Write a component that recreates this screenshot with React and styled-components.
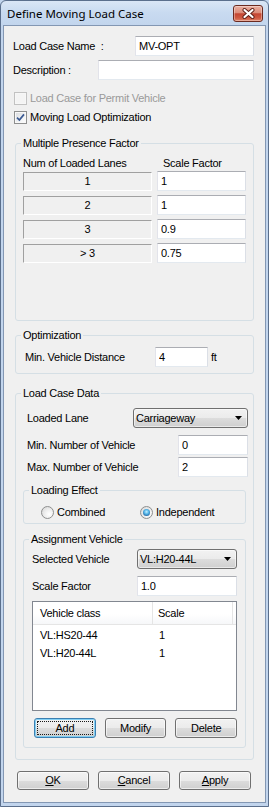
import React from "react";
import styled, { createGlobalStyle } from "styled-components";

const UI_FONT = `"Liberation Sans", Arial, sans-serif`;

const GlobalStyle = createGlobalStyle`
  html, body { margin: 0; padding: 0; background: #c2d5ed; }
  *, *::before, *::after { box-sizing: border-box; }
`;

const Window = styled.div`
  width: 269px;
  height: 807px;
  display: flex;
  flex-direction: column;
  border: 1px solid #5b6f8c;
  border-radius: 6px 6px 0 0;
  background: linear-gradient(to bottom, #dae6f5 0px, #c8daf0 12px, #c2d5ed 25px, #c2d5ed 100%);
  padding: 0 2px 3px 2px;
  font-family: ${UI_FONT};
  font-size: 11px;
  letter-spacing: -0.25px;
  color: #000;
`;

const TitleBar = styled.div`
  height: 24px;
  flex: none;
  display: flex;
  align-items: flex-start;
  justify-content: space-between;
  padding: 0 3px 0 4px;
`;

const Title = styled.div`
  font-family: "Noto Sans", "Liberation Sans", sans-serif;
  font-size: 11.5px;
  line-height: 16px;
  margin-top: 5px;
  letter-spacing: 0;
  color: #000;
`;

const CloseButton = styled.div`
  width: 30px;
  height: 17px;
  margin-top: 4px;
  border: 1px solid #6b2a20;
  border-radius: 3px;
  background: linear-gradient(
    to bottom,
    #eab0a2 0%,
    #dc8c79 45%,
    #c44531 52%,
    #cf5a42 80%,
    #e0856a 100%
  );
  box-shadow: inset 0 0 0 1px rgba(255, 255, 255, 0.35);
  display: flex;
  align-items: center;
  justify-content: center;
`;

const Content = styled.div`
  flex: 1;
  background: #f0f0f0;
  border: 1px solid #8397b3;
  padding: 10px 11px 0 9px;
  display: flex;
  flex-direction: column;
`;

const FieldRow = styled.div`
  display: flex;
  align-items: center;
  height: 20px;
  margin-top: ${(p) => p.$mt || 0}px;
  padding-left: ${(p) => p.$pl || 0}px;
  flex: none;
`;

const FieldLabel = styled.span`
  width: ${(p) => p.$w}px;
  flex: none;
  line-height: 13px;
  white-space: pre;
`;

const TextBox = styled.input`
  height: 20px;
  width: ${(p) => (p.$w ? `${p.$w}px` : "auto")};
  flex: ${(p) => (p.$w ? "none" : "1")};
  min-width: 0;
  border: 1px solid #dbdfe6;
  border-top-color: #abadb3;
  border-left-color: #e2e3ea;
  border-bottom-color: #e3e9ef;
  background: #fff;
  padding: 0 3px;
  margin: 0;
  font: inherit;
  letter-spacing: inherit;
  color: #000;
  outline: none;
`;

const CheckRow = styled.label`
  display: flex;
  align-items: center;
  gap: 3px;
  height: 13px;
  margin-top: ${(p) => p.$mt || 0}px;
  padding-left: 1px;
  line-height: 13px;
  color: ${(p) => (p.$disabled ? "#9a9a9a" : "#000")};
  flex: none;
`;

const CheckBox = styled.span`
  width: 13px;
  height: 13px;
  flex: none;
  border: 1px solid ${(p) => (p.$disabled ? "#c2c2c2" : "#8e8f8f")};
  background: ${(p) =>
    p.$disabled
      ? "#f4f4f4"
      : "linear-gradient(135deg, #d9dbdf 0%, #eef0f2 55%, #ffffff 100%)"};
  box-shadow: inset 0 0 0 1px ${(p) => (p.$disabled ? "#f7f7f7" : "#f8f8f8")};
  display: flex;
  align-items: center;
  justify-content: center;
`;

const Group = styled.fieldset`
  margin: ${(p) => p.$mt || 0}px ${(p) => p.$mr || 0}px 0 ${(p) => p.$ml || 0}px;
  padding: 0;
  border: 1px solid #d5dfe5;
  border-radius: 3px;
  min-width: 0;
  height: ${(p) => p.$h}px;
  flex: none;
`;

const Legend = styled.legend`
  margin-left: 5px;
  padding: 0 2px;
  line-height: 13px;
  font-size: 11px;
`;

const GroupBody = styled.div`
  padding: ${(p) => p.$pad};
  display: flex;
  flex-direction: column;
`;

const PresenceHeader = styled.div`
  display: grid;
  grid-template-columns: 129px 89px;
  column-gap: 5px;
  height: 14px;
  line-height: 14px;
`;

const HeaderText = styled.span`
  padding-left: ${(p) => p.$pl || 0}px;
`;

const PresenceGrid = styled.div`
  display: grid;
  grid-template-columns: 129px 89px;
  column-gap: 5px;
  row-gap: 4px;
  margin-top: 1px;
`;

const LaneCell = styled.div`
  height: 19px;
  margin-top: 1px;
  border: 1px solid;
  border-color: #a0a0a0 #ffffff #ffffff #a0a0a0;
  display: flex;
  align-items: center;
  justify-content: center;
  line-height: 13px;
`;

const Unit = styled.span`
  margin-left: 3px;
  line-height: 13px;
`;

const Combo = styled.div`
  height: 20px;
  width: ${(p) => (p.$w ? `${p.$w}px` : "auto")};
  flex: ${(p) => (p.$w ? "none" : "1")};
  border: 1px solid #707070;
  border-radius: 3px;
  background: linear-gradient(
    to bottom,
    #f2f2f2 0%,
    #ebebeb 50%,
    #dddddd 50%,
    #cfcfcf 100%
  );
  box-shadow: inset 0 0 0 1px rgba(255, 255, 255, 0.55);
  display: flex;
  align-items: center;
  justify-content: space-between;
  padding: 0 5px 0 2px;
  line-height: 13px;
`;

const RadioRow = styled.div`
  display: grid;
  grid-template-columns: 99px auto;
  align-items: center;
  height: 13px;
`;

const RadioItem = styled.label`
  display: flex;
  align-items: center;
  gap: 3px;
  line-height: 13px;
`;

const RadioDot = styled.span`
  width: 13px;
  height: 13px;
  flex: none;
  border-radius: 50%;
  border: 1px solid #8e8f8f;
  background: radial-gradient(circle at 65% 65%, #ffffff 0%, #eeeeee 45%, #d2d2d2 100%);
  display: flex;
  align-items: center;
  justify-content: center;
  &::after {
    content: "";
    display: ${(p) => (p.$checked ? "block" : "none")};
    width: 7px;
    height: 7px;
    border-radius: 50%;
    background: radial-gradient(
      circle at 50% 40%,
      #c6efff 0%,
      #55b6e8 40%,
      #1c5a98 85%,
      #184a80 100%
    );
  }
`;

const List = styled.div`
  height: 110px;
  margin-top: 5px;
  border: 1px solid #828790;
  background: #fff;
  display: flex;
  flex-direction: column;
  flex: none;
`;

const ListHeader = styled.div`
  display: flex;
  height: 23px;
  border-bottom: 1px solid #e5e5e5;
  background: linear-gradient(to bottom, #ffffff 0%, #ffffff 55%, #f6f7f9 100%);
`;

const HeaderCell = styled.div`
  width: ${(p) => (p.$w ? `${p.$w}px` : "auto")};
  flex: ${(p) => (p.$w ? "none" : "1")};
  border-right: ${(p) => (p.$w ? "1px solid #e5e5e5" : "none")};
  padding: 4px 0 0 ${(p) => p.$pl || 0}px;
  line-height: 14px;
`;

const ListBody = styled.div`
  padding-top: 1px;
`;

const ListRow = styled.div`
  display: flex;
  height: 18px;
  line-height: 18px;
`;

const ListCell = styled.div`
  width: ${(p) => (p.$w ? `${p.$w}px` : "auto")};
  flex: ${(p) => (p.$w ? "none" : "1")};
  padding-left: ${(p) => p.$pl || 0}px;
`;

const ButtonRow = styled.div`
  display: flex;
  gap: ${(p) => p.$gap}px;
  margin-top: ${(p) => p.$mt || 0}px;
  padding-left: ${(p) => p.$pl || 0}px;
  flex: none;
`;

const Button = styled.button`
  width: ${(p) => p.$w}px;
  height: ${(p) => p.$h || 20}px;
  margin: 0;
  padding: 2px;
  border: 1px solid ${(p) => (p.$focused ? "#3c7fb1" : "#707070")};
  border-radius: 3px;
  background: linear-gradient(
    to bottom,
    #f2f2f2 0%,
    #ebebeb 50%,
    #dddddd 50%,
    #cfcfcf 100%
  );
  box-shadow: inset 0 0 0 1px
    ${(p) => (p.$focused ? "rgba(120, 205, 245, 0.9)" : "rgba(255, 255, 255, 0.6)")};
  font: inherit;
  letter-spacing: inherit;
  color: #000;
  display: flex;
  cursor: default;
`;

const ButtonFace = styled.span`
  flex: 1;
  display: flex;
  align-items: center;
  justify-content: center;
  line-height: 13px;
  border: 1px dotted ${(p) => (p.$focused ? "#1a1a1a" : "transparent")};
`;

function ComboArrow() {
  return (
    <svg width="7" height="4" viewBox="0 0 7 4" aria-hidden="true">
      <path d="M0 0 H7 L3.5 4 Z" fill="#000" />
    </svg>
  );
}

function CheckMark() {
  return (
    <svg width="9" height="9" viewBox="0 0 9 9" aria-hidden="true">
      <path
        d="M1 4.6 L3.4 7 L8 1.4"
        fill="none"
        stroke="#3b5a93"
        strokeWidth="1.7"
      />
    </svg>
  );
}

const lanes = [
  { lanes: "1", factor: "1" },
  { lanes: "2", factor: "1" },
  { lanes: "3", factor: "0.9" },
  { lanes: "> 3", factor: "0.75" },
];

const vehicles = [
  { name: "VL:HS20-44", scale: "1" },
  { name: "VL:H20-44L", scale: "1" },
];

export default function App() {
  return (
    <>
      <GlobalStyle />
      <Window>
        <TitleBar>
          <Title>Define Moving Load Case</Title>
          <CloseButton aria-label="Close">
            <svg width="13" height="11" viewBox="0 0 13 11" aria-hidden="true">
              <path
                d="M2.5 2 L10.5 9 M10.5 2 L2.5 9"
                stroke="#5b1d14"
                strokeWidth="4"
                strokeLinecap="round"
              />
              <path
                d="M2.5 2 L10.5 9 M10.5 2 L2.5 9"
                stroke="#ffffff"
                strokeWidth="2.2"
                strokeLinecap="round"
              />
            </svg>
          </CloseButton>
        </TitleBar>

        <Content>
          <FieldRow>
            <FieldLabel $w={122}>{"Load Case Name  :"}</FieldLabel>
            <TextBox defaultValue="MV-OPT" readOnly />
          </FieldRow>
          <FieldRow $mt={4}>
            <FieldLabel $w={85}>Description :</FieldLabel>
            <TextBox defaultValue="" readOnly />
          </FieldRow>

          <CheckRow $mt={12} $disabled>
            <CheckBox $disabled />
            <span>Load Case for Permit Vehicle</span>
          </CheckRow>
          <CheckRow $mt={6}>
            <CheckBox>
              <CheckMark />
            </CheckBox>
            <span>Moving Load Optimization</span>
          </CheckRow>

          <Group $mt={13} $ml={2} $h={184}>
            <Legend>Multiple Presence Factor</Legend>
            <GroupBody $pad="6px 0 0 7px">
              <PresenceHeader>
                <HeaderText>Num of Loaded Lanes</HeaderText>
                <HeaderText $pl={6}>Scale Factor</HeaderText>
              </PresenceHeader>
              <PresenceGrid>
                {lanes.map((l) => (
                  <React.Fragment key={l.lanes}>
                    <LaneCell>{l.lanes}</LaneCell>
                    <TextBox $w={89} defaultValue={l.factor} readOnly />
                  </React.Fragment>
                ))}
              </PresenceGrid>
            </GroupBody>
          </Group>

          <Group $mt={8} $ml={2} $h={45}>
            <Legend>Optimization</Legend>
            <GroupBody $pad="5px 0 0 9px">
              <FieldRow>
                <FieldLabel $w={130}>Min. Vehicle Distance</FieldLabel>
                <TextBox $w={53} defaultValue="4" readOnly />
                <Unit>ft</Unit>
              </FieldRow>
            </GroupBody>
          </Group>

          <Group $mt={13} $ml={2} $h={373}>
            <Legend>Load Case Data</Legend>
            <GroupBody $pad="8px 5px 0 7px">
              <FieldRow $pl={4}>
                <FieldLabel $w={106}>Loaded Lane</FieldLabel>
                <Combo>
                  <span>Carriageway</span>
                  <ComboArrow />
                </Combo>
              </FieldRow>
              <FieldRow $pl={4} $mt={7}>
                <FieldLabel $w={151}>Min. Number of Vehicle</FieldLabel>
                <TextBox defaultValue="0" readOnly />
              </FieldRow>
              <FieldRow $pl={4} $mt={2}>
                <FieldLabel $w={151}>Max. Number of Vehicle</FieldLabel>
                <TextBox defaultValue="2" readOnly />
              </FieldRow>

              <Group $mt={7} $mr={2} $h={40}>
                <Legend>Loading Effect</Legend>
                <GroupBody $pad="9px 0 0 17px">
                  <RadioRow>
                    <RadioItem>
                      <RadioDot />
                      <span>Combined</span>
                    </RadioItem>
                    <RadioItem>
                      <RadioDot $checked />
                      <span>Independent</span>
                    </RadioItem>
                  </RadioRow>
                </GroupBody>
              </Group>

              <Group $mt={9} $mr={2} $h={215}>
                <Legend>Assignment Vehicle</Legend>
                <GroupBody $pad="3px 8px 0 8px">
                  <FieldRow>
                    <FieldLabel $w={105}>Selected Vehicle</FieldLabel>
                    <Combo>
                      <span>VL:H20-44L</span>
                      <ComboArrow />
                    </Combo>
                  </FieldRow>
                  <FieldRow $mt={7}>
                    <FieldLabel $w={105}>Scale Factor</FieldLabel>
                    <TextBox defaultValue="1.0" readOnly />
                  </FieldRow>

                  <List>
                    <ListHeader>
                      <HeaderCell $w={120} $pl={7}>
                        Vehicle class
                      </HeaderCell>
                      <HeaderCell $w={80} $pl={5}>
                        Scale
                      </HeaderCell>
                      <HeaderCell />
                    </ListHeader>
                    <ListBody>
                      {vehicles.map((v) => (
                        <ListRow key={v.name}>
                          <ListCell $w={120} $pl={7}>
                            {v.name}
                          </ListCell>
                          <ListCell $pl={6}>{v.scale}</ListCell>
                        </ListRow>
                      ))}
                    </ListBody>
                  </List>

                  <ButtonRow $mt={7} $pl={2} $gap={9}>
                    <Button $w={62} $focused>
                      <ButtonFace $focused>Add</ButtonFace>
                    </Button>
                    <Button $w={62}>
                      <ButtonFace>Modify</ButtonFace>
                    </Button>
                    <Button $w={62}>
                      <ButtonFace>Delete</ButtonFace>
                    </Button>
                  </ButtonRow>
                </GroupBody>
              </Group>
            </GroupBody>
          </Group>

          <ButtonRow $mt={11} $pl={4} $gap={9}>
            <Button $w={72} $h={19}>
              <ButtonFace>
                <span>
                  <u>O</u>K
                </span>
              </ButtonFace>
            </Button>
            <Button $w={72} $h={19}>
              <ButtonFace>
                <span>
                  <u>C</u>ancel
                </span>
              </ButtonFace>
            </Button>
            <Button $w={72} $h={19}>
              <ButtonFace>
                <span>
                  <u>A</u>pply
                </span>
              </ButtonFace>
            </Button>
          </ButtonRow>
        </Content>
      </Window>
    </>
  );
}
